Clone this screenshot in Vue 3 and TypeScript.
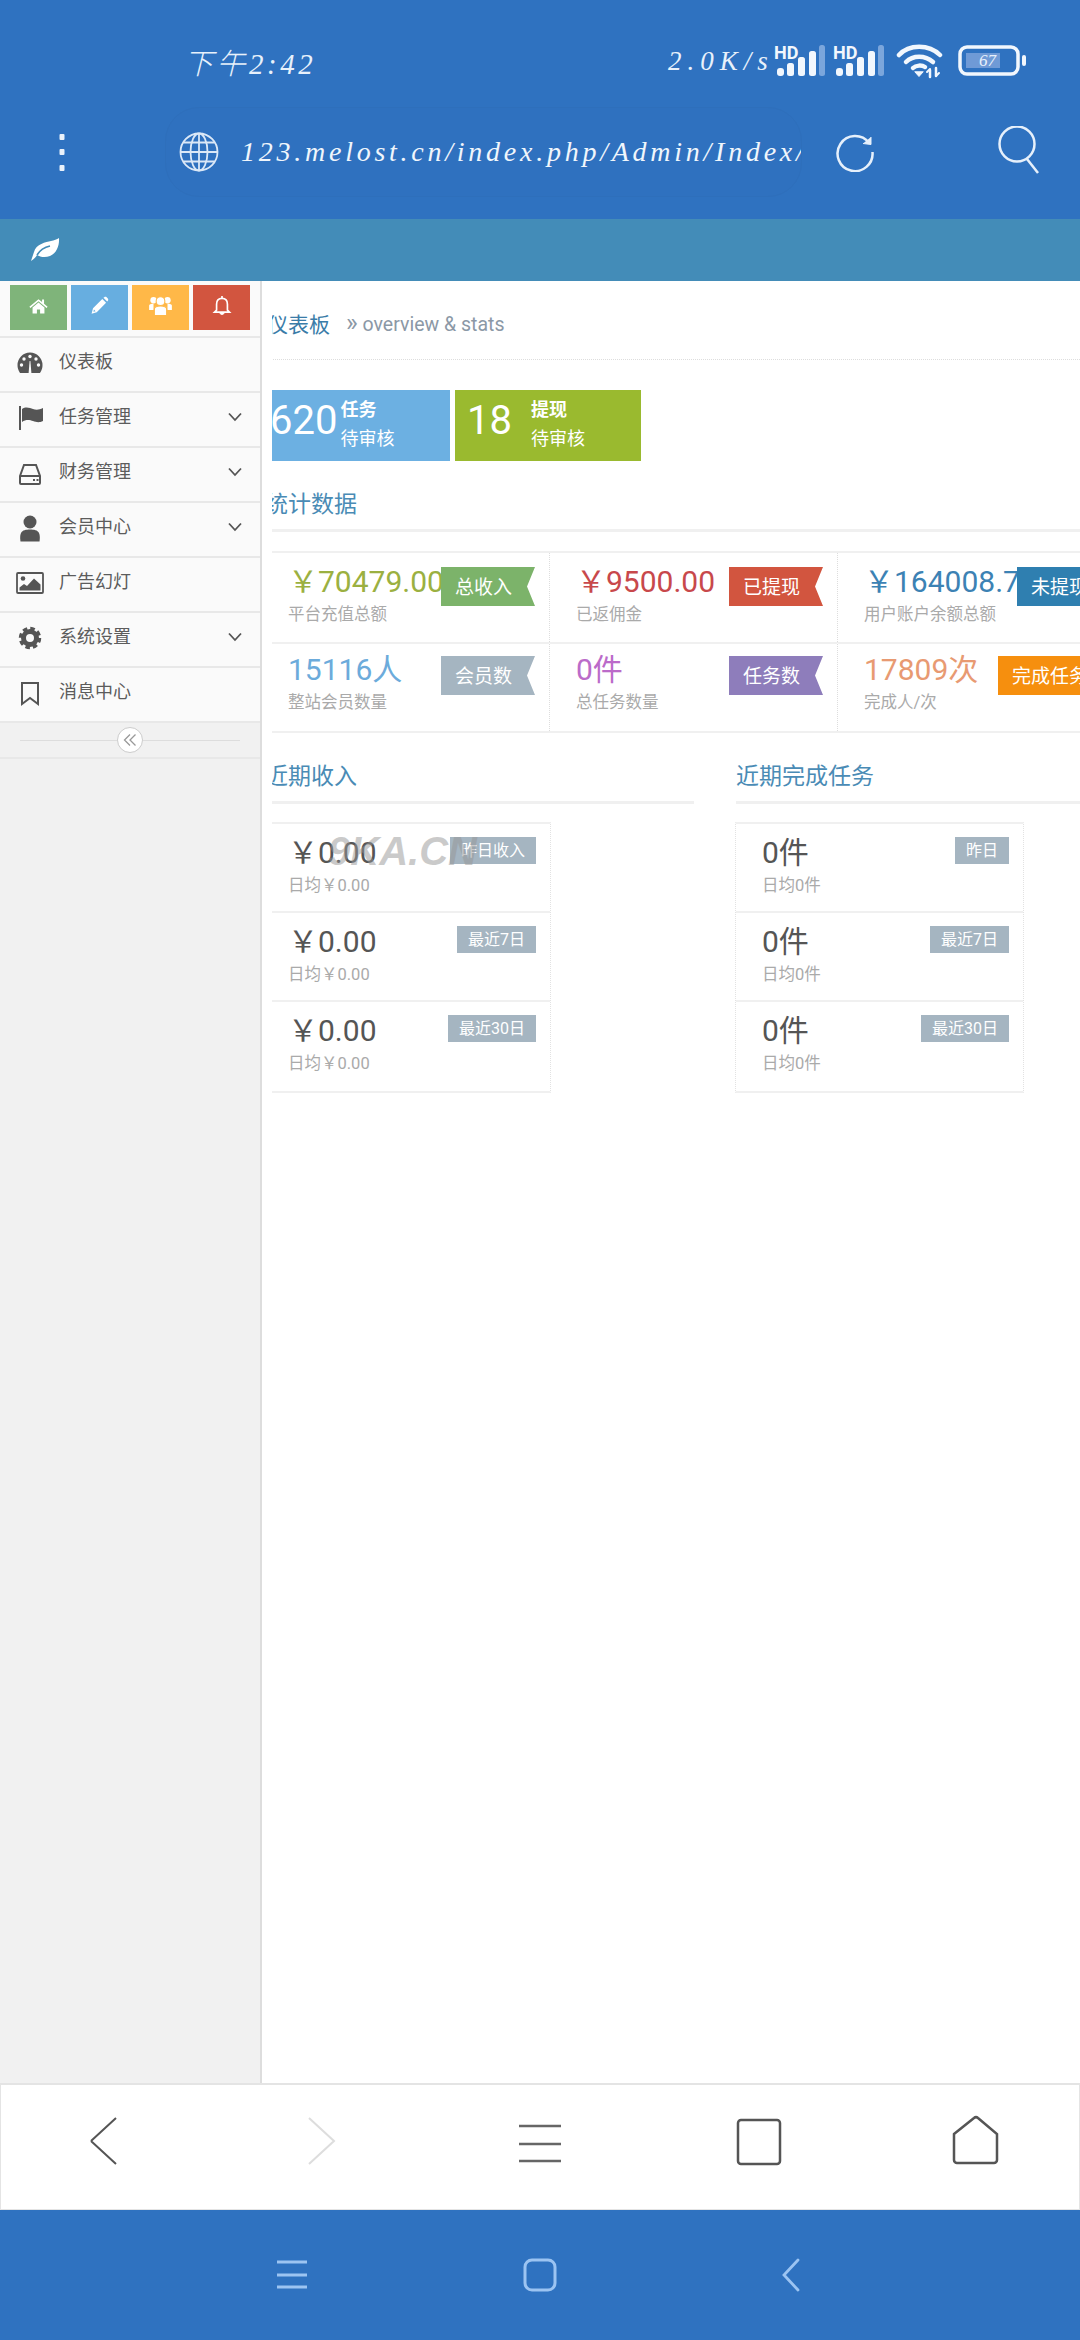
<script setup lang="ts">
interface Stat { value: string; label: string; tag: string; color: string; tagColor: string }
interface Row { value: string; sub: string; tag: string }

const Y = '\uFFE5'

const menu = [
  { icon: 'gauge', label: '仪表板', more: false },
  { icon: 'flag', label: '任务管理', more: true },
  { icon: 'hdd', label: '财务管理', more: true },
  { icon: 'user', label: '会员中心', more: true },
  { icon: 'picture', label: '广告幻灯', more: false },
  { icon: 'cog', label: '系统设置', more: true },
  { icon: 'bookmark', label: '消息中心', more: false },
]

const stats: Stat[] = [
  { value: Y + '70479.00', label: '平台充值总额', tag: '总收入', color: 'c-olive', tagColor: 'b-green' },
  { value: Y + '9500.00', label: '已返佣金', tag: '已提现', color: 'c-red', tagColor: 'b-red' },
  { value: Y + '164008.75', label: '用户账户余额总额', tag: '未提现', color: 'c-blue', tagColor: 'b-blue' },
  { value: '15116人', label: '整站会员数量', tag: '会员数', color: 'c-sky', tagColor: 'b-grey' },
  { value: '0件', label: '总任务数量', tag: '任务数', color: 'c-purple', tagColor: 'b-purple' },
  { value: '17809次', label: '完成人/次', tag: '完成任务', color: 'c-orange', tagColor: 'b-orange' },
]

const income: Row[] = [
  { value: Y + '0.00', sub: '日均' + Y + '0.00', tag: '昨日收入' },
  { value: Y + '0.00', sub: '日均' + Y + '0.00', tag: '最近7日' },
  { value: Y + '0.00', sub: '日均' + Y + '0.00', tag: '最近30日' },
]

const tasks: Row[] = [
  { value: '0件', sub: '日均0件', tag: '昨日' },
  { value: '0件', sub: '日均0件', tag: '最近7日' },
  { value: '0件', sub: '日均0件', tag: '最近30日' },
]
</script>

<template>
  <div class="app">
    <header class="top">
      <div class="status">
        <span class="time">下午2:42</span>
        <span class="speed">2.0K/s</span>
        <svg class="sig sig1" width="52" height="32" viewBox="0 0 52 32">
          <text x="0" y="13.5" class="hd">HD</text>
          <rect x="3" y="23" width="7" height="8" rx="3" fill="#f2f7fd" />
          <rect x="13" y="18" width="7" height="13" rx="2.5" fill="#f2f7fd" />
          <rect x="24" y="12" width="7" height="19" rx="2.5" fill="#f2f7fd" />
          <rect x="35" y="6" width="7" height="25" rx="2.5" fill="#f2f7fd" />
          <rect x="45" y="0" width="6" height="31" rx="2.5" fill="#7ba6dc" />
        </svg>
        <svg class="sig sig2" width="52" height="32" viewBox="0 0 52 32">
          <text x="0" y="13.5" class="hd">HD</text>
          <rect x="3" y="23" width="7" height="8" rx="3" fill="#f2f7fd" />
          <rect x="13" y="18" width="7" height="13" rx="2.5" fill="#f2f7fd" />
          <rect x="24" y="12" width="7" height="19" rx="2.5" fill="#f2f7fd" />
          <rect x="35" y="6" width="7" height="25" rx="2.5" fill="#f2f7fd" />
          <rect x="45" y="0" width="6" height="31" rx="2.5" fill="#7ba6dc" />
        </svg>
        <svg class="wifi" width="48" height="36" viewBox="0 0 48 36" fill="none" stroke="#f2f7fd" stroke-linecap="round">
          <path d="M3 12 C13 1 33 1 44 12" stroke-width="4.5" />
          <path d="M10 19 C17 12 29 12 37 19" stroke-width="4.5" />
          <path d="M17 25 C20 22 26 22 29 24" stroke-width="4.5" />
          <path d="M19 29 L23 33.5 L27 29 Z" fill="#f2f7fd" stroke-width="1" />
          <path d="M34 27 V34 M40 25 V33" stroke-width="2.5" />
          <path d="M31 29 L34 26 M43 30 L40 33" stroke-width="2" />
        </svg>
        <svg class="bat" width="70" height="32" viewBox="0 0 70 32">
          <rect x="2" y="2" width="58" height="27" rx="7" fill="none" stroke="#f2f7fd" stroke-width="3.5" />
          <rect x="8" y="8" width="34" height="15" fill="#6f9ad6" />
          <text x="21" y="21" class="batt">67</text>
          <rect x="64" y="10" width="4" height="11" rx="2" fill="#f2f7fd" />
        </svg>
      </div>
      <div class="browser">
        <svg class="dots" width="10" height="44" viewBox="0 0 10 44" fill="#eaf2fb">
          <rect x="2.5" y="4" width="5" height="6" rx="1" />
          <rect x="2.5" y="19" width="5" height="6" rx="1" />
          <rect x="2.5" y="35" width="5" height="6" rx="1" />
        </svg>
        <div class="pill">
          <svg class="globe" width="40" height="40" viewBox="0 0 40 40" fill="none" stroke="#dbe8f7" stroke-width="1.8">
            <circle cx="20" cy="20" r="18.5" />
            <ellipse cx="20" cy="20" rx="8.5" ry="18.5" />
            <path d="M20 1.5 V38.5 M1.5 20 H38.5 M4.5 10.5 H35.5 M4.5 29.5 H35.5" />
          </svg>
          <span class="url">123.melost.cn/index.php/Admin/Index/</span>
        </div>
        <svg class="reload" width="40" height="40" viewBox="0 0 40 40" fill="none" stroke="#e6f0fb" stroke-width="2.5">
          <path d="M34 11 A17.5 17.5 0 1 0 37.5 20" />
          <path d="M28 11.5 L36 12.5 L36 5" fill="#e6f0fb" stroke-width="1" />
        </svg>
        <svg class="search" width="48" height="48" viewBox="0 0 48 48" fill="none" stroke="#e6f0fb" stroke-width="2.5">
          <circle cx="22" cy="18" r="17.5" />
          <path d="M32 33 L43 47" />
        </svg>
      </div>
    </header>

    <div class="teal">
      <svg width="30" height="24" viewBox="0 0 30 24">
        <path d="M1 23 C2 20 3 17 4 14 C6 6 16 4 21 3 C24 2.400 27 1.500 29 0 C29.500 7 27 15 20 18 C15 20 10 19 7 17 C6 19 4 21 1 23 Z" fill="#fff" />
        <path d="M7 17 C10 12 15 9 20 8" fill="none" stroke="#438cb8" stroke-width="1.600" />
      </svg>
    </div>

    <div class="body">
      <aside class="side">
        <div class="quick">
          <div class="qb q-green">
            <svg width="19" height="19" viewBox="0 0 24 24" fill="#fff"><path d="M12 4 L0.500 13.500 L1.800 15 L12 6.700 L22.200 15 L23.500 13.500 L19 9.800 V4.500 H16.500 V7.700 Z" /><path d="M12 8.300 L4.500 14.500 V22 H10 V17 H14 V22 H19.500 V14.500 Z" /></svg>
          </div>
          <div class="qb q-blue">
            <svg width="19" height="19" viewBox="0 0 24 24" fill="#fff"><path d="M2 22.500 L3.800 15.500 L15.500 3.800 L20.300 8.500 L8.500 20.500 Z M5 17 L4.300 20 L7 19.300 Z" fill-rule="evenodd" /><path d="M17 2.300 L18 1.500 C19 .8 20 .8 21 1.500 L22.500 3 C23.200 4 23.200 5 22.500 6 L21.700 7 Z" /></svg>
          </div>
          <div class="qb q-orange">
            <svg width="23" height="21" viewBox="0 0 26 24" fill="#fff"><circle cx="5" cy="6" r="3.600" /><circle cx="21" cy="6" r="3.600" /><path d="M0 17 V12 C0 10.500 2 10 5 10 V17 Z M26 17 V12 C26 10.500 24 10 21 10 V17 Z" /><circle cx="13" cy="7" r="5" stroke="#ffb848" stroke-width="1.200" /><path d="M6 23.500 V16 C6 13 9 12.500 13 12.500 S20 13 20 16 V23.500 Z" stroke="#ffb848" stroke-width="1.200" /></svg>
          </div>
          <div class="qb q-red">
            <svg width="20" height="21" viewBox="0 0 24 24" fill="none" stroke="#fff" stroke-width="2"><path d="M5.500 17.500 V10.500 C5.500 6 8 3.500 12 3.500 S18.500 6 18.500 10.500 V17.500 L21 20 H3 Z" /><path d="M12 .5 V3.500" /><path d="M9.500 21 C10 23.500 14 23.500 14.500 21" fill="#fff" stroke-width="1" /></svg>
          </div>
        </div>
        <ul class="menu">
          <li v-for="item in menu" :key="item.label" class="item">
            <svg class="mi" width="28" height="28" viewBox="0 0 28 28">
              <template v-if="item.icon === 'gauge'">
                <path d="M4 24 C2 21 1.500 18.500 1.500 16 A12.500 12.500 0 0 1 26.500 16 C26.500 18.500 26 21 24 24 Z" fill="#555" />
                <circle cx="14" cy="7.500" r="1.700" fill="#fafafa" /><circle cx="8" cy="10" r="1.700" fill="#fafafa" /><circle cx="20" cy="10" r="1.700" fill="#fafafa" /><circle cx="5.500" cy="16" r="1.700" fill="#fafafa" /><circle cx="22.500" cy="16" r="1.700" fill="#fafafa" />
                <path d="M12.600 24 L13.600 12 H14.400 L15.400 24 Z" fill="#fafafa" />
              </template>
              <template v-else-if="item.icon === 'flag'">
                <rect x="3" y="2" width="2" height="24" fill="#555" />
                <path d="M6 5 C10 2 14 4 17 5 S23 6 27 4 V17 C23 19 20 18 17 17 S10 15 6 18 Z" fill="#555" />
              </template>
              <template v-else-if="item.icon === 'hdd'">
                <path d="M4 17 L8 6 H20 L24 17 V24 A1 1 0 0 1 23 25 H5 A1 1 0 0 1 4 24 Z M4 17 H24" fill="none" stroke="#555" stroke-width="2" />
                <rect x="17" y="20" width="2" height="2" fill="#555" /><rect x="20.500" y="20" width="2" height="2" fill="#555" />
              </template>
              <template v-else-if="item.icon === 'user'">
                <circle cx="14" cy="8" r="6.500" fill="#555" />
                <path d="M4.500 27.500 C4 24 4 21 5 19 C6.500 16 10 15.500 14 15.500 S21.500 16 23 19 C24 21 24 24 23.500 27.500 Z" fill="#555" />
              </template>
              <template v-else-if="item.icon === 'picture'">
                <rect x="1" y="4" width="26" height="20" rx="1" fill="none" stroke="#555" stroke-width="1.800" />
                <circle cx="7" cy="9.500" r="2.300" fill="#555" />
                <path d="M3.500 21.500 V18.500 L8 15 L11 17 L18 9.500 L24.500 15.500 V21.500 Z" fill="#555" />
              </template>
              <template v-else-if="item.icon === 'cog'">
                <circle cx="14" cy="14" r="6.500" fill="none" stroke="#555" stroke-width="5" />
                <circle cx="14" cy="14" r="9.500" fill="none" stroke="#555" stroke-width="3.500" stroke-dasharray="4.460 3" />
              </template>
              <template v-else>
                <path d="M6 4 H22 V25 L14 19 L6 25 Z" fill="none" stroke="#555" stroke-width="2" />
              </template>
            </svg>
            <span class="ml">{{ item.label }}</span>
            <svg v-if="item.more" class="chev" width="14" height="10" viewBox="0 0 14 10" fill="none" stroke="#555" stroke-width="1.800"><path d="M1 1.500 L7 8 L13 1.500" /></svg>
          </li>
        </ul>
        <div class="collapse">
          <span class="cl"></span>
          <span class="cb">
            <svg width="14" height="14" viewBox="0 0 14 14" fill="none" stroke="#999" stroke-width="1.300"><path d="M7 1.500 L1.500 7 L7 12.500 M12.500 1.500 L7 7 L12.500 12.500" /></svg>
          </span>
          <span class="cl"></span>
        </div>
      </aside>

      <main class="main">
        <div class="inner">
          <div class="page-title">
            <span class="pt">仪表板</span>
            <span class="ps"><span class="pa">»</span> overview &amp; stats</span>
          </div>
          <div class="boxes">
            <div class="box box-a">
              <span class="bn">620</span>
              <div class="bl"><b>任务</b><span>待审核</span></div>
            </div>
            <div class="box box-b">
              <span class="bn">18</span>
              <div class="bl"><b>提现</b><span>待审核</span></div>
            </div>
          </div>
          <h3 class="sec sec-l">统计数据</h3>
          <div class="grid">
            <div v-for="s in stats" :key="s.label" class="cell">
              <div class="val" :class="s.color">{{ s.value }}</div>
              <div class="sub">{{ s.label }}</div>
              <span class="rib" :class="s.tagColor">{{ s.tag }}</span>
            </div>
          </div>
          <div class="lower">
            <section class="col col-l">
              <h3 class="sec sec-l">近期收入</h3>
              <div class="list">
                <div v-for="r in income" :key="r.tag" class="row">
                  <div class="val">{{ r.value }}</div>
                  <div class="sub">{{ r.sub }}</div>
                  <span class="tag">{{ r.tag }}</span>
                </div>
                <span class="mark">9KA.CN</span>
              </div>
            </section>
            <section class="col col-r">
              <h3 class="sec">近期完成任务</h3>
              <div class="list list-r">
                <div v-for="r in tasks" :key="r.tag" class="row">
                  <div class="val">{{ r.value }}</div>
                  <div class="sub">{{ r.sub }}</div>
                  <span class="tag">{{ r.tag }}</span>
                </div>
              </div>
            </section>
          </div>
        </div>
      </main>
    </div>

    <nav class="tools">
      <svg width="60" height="60" viewBox="0 0 60 60" fill="none" stroke="#555" stroke-width="2"><path d="M37 7 L12 30 M12 30 L37 53" /></svg>
      <svg width="60" height="60" viewBox="0 0 60 60" fill="none" stroke="#ddd" stroke-width="2"><path d="M14 7 L39 30 L14 53" /></svg>
      <svg width="60" height="60" viewBox="0 0 60 60" fill="none" stroke="#666" stroke-width="2.500"><path d="M8 15 H50 M8 33 H50 M8 50 H50" /></svg>
      <svg width="60" height="60" viewBox="0 0 60 60" fill="none" stroke="#555" stroke-width="2.500"><rect x="11" y="9" width="42" height="44" rx="3" /></svg>
      <svg width="60" height="60" viewBox="0 0 60 60" fill="none" stroke="#555" stroke-width="2.500"><path d="M11 23 L31 7 A3 3 0 0 1 35 7 L54 23 V49 A3 3 0 0 1 51 52 H14 A3 3 0 0 1 11 49 Z" /></svg>
    </nav>

    <nav class="sysnav">
      <svg width="40" height="40" viewBox="0 0 40 40" fill="none" stroke="#9cc4f2" stroke-width="3"><path d="M5 7 H35 M5 20 H35 M5 32 H35" /></svg>
      <svg width="40" height="40" viewBox="0 0 40 40" fill="none" stroke="#9cc4f2" stroke-width="3"><rect x="5" y="5" width="30" height="30" rx="7" /></svg>
      <svg width="40" height="40" viewBox="0 0 40 40" fill="none" stroke="#9cc4f2" stroke-width="2.800" stroke-linecap="round"><path d="M27 5 L13 20 L27 35" /></svg>
    </nav>
  </div>
</template>

<style scoped>
.app {
  width: 1080px;
  height: 2340px;
  display: flex;
  flex-direction: column;
  overflow: hidden;
  background: #fff;
  font-family: Roboto, "Noto Sans CJK SC", sans-serif;
  color: #555;
}

.top {
  height: 219px;
  flex: none;
  background: #2f72c0;
  box-sizing: border-box;
}
.status {
  height: 107px;
  box-sizing: border-box;
  padding: 15px 0 0 184px;
  display: flex;
  align-items: center;
  color: #e8f1fb;
}
.time {
  width: 131px;
  font-family: "Liberation Serif", "Noto Sans CJK SC", serif;
  font-style: italic;
  font-weight: 300;
  font-size: 29px;
  letter-spacing: 3.5px;
  white-space: nowrap;
}
.speed {
  margin-left: 353px;
  width: 104px;
  font-family: "Liberation Serif", serif;
  font-style: italic;
  font-size: 27px;
  letter-spacing: 6px;
  white-space: nowrap;
}
.sig { overflow: visible; }
.sig1 { margin-left: 2px; }
.sig2 { margin-left: 7px; }
.wifi { margin-left: 11px; }
.bat { margin-left: 14px; }
.hd {
  font: 700 18px Roboto, sans-serif;
  fill: #f2f7fd;
}
.batt {
  font: italic 17px "Liberation Serif", serif;
  fill: #e8f1fb;
}

.browser {
  height: 90px;
  padding-left: 57px;
  display: flex;
  align-items: center;
}
.dots { margin-right: 98px; flex: none; }
.pill {
  width: 637px;
  height: 90px;
  flex: none;
  box-sizing: border-box;
  padding-left: 13px;
  border-radius: 34px;
  background: #2f71bf;
  border: 1px solid #2e6fbb;
  display: flex;
  align-items: center;
  gap: 22px;
  overflow: hidden;
}
.globe { flex: none; }
.url {
  font-family: "Liberation Serif", serif;
  font-style: italic;
  font-size: 28px;
  letter-spacing: 3.75px;
  white-space: nowrap;
  color: #f0f6fc;
}
.reload { margin-left: 33px; flex: none; }
.search { margin: -4px 0 0 120px; flex: none; }

.teal {
  height: 62px;
  flex: none;
  background: #438cb8;
  padding-left: 30px;
  display: flex;
  align-items: center;
}

.body {
  flex: 1;
  min-height: 0;
  display: flex;
}
.side {
  width: 262px;
  flex: none;
  box-sizing: border-box;
  background: #f1f1f1;
  border-right: 2px solid #ddd;
}
.quick {
  height: 55px;
  box-sizing: border-box;
  padding: 4px 10px 0;
  display: flex;
  gap: 4px;
  background: #fafafa;
}
.qb {
  width: 57px;
  height: 45px;
  display: flex;
  align-items: center;
  justify-content: center;
  padding-bottom: 4px;
  box-sizing: border-box;
}
.q-green { background: #7fb47a; }
.q-blue { background: #67aee0; }
.q-orange { background: #ffb848; }
.q-red { background: #d2553f; }
.menu {
  list-style: none;
  margin: 0;
  padding: 0;
}
.item {
  height: 55px;
  box-sizing: border-box;
  padding: 0 18px 3px 16px;
  display: flex;
  align-items: center;
  gap: 15px;
  background: #fafafa;
  border-top: 2px solid #e8e8e8;
}
.mi { flex: none; }
.ml { font-size: 18px; color: #5c5c5c; margin-bottom: 6px; }
.chev { margin-left: auto; margin-bottom: 3px; }
.collapse {
  height: 38px;
  box-sizing: border-box;
  padding: 0 20px;
  display: flex;
  align-items: center;
  border-top: 2px solid #e8e8e8;
  border-bottom: 2px solid #e8e8e8;
}
.cl { flex: 1; height: 1px; background: #ddd; }
.cb {
  width: 26px;
  height: 26px;
  box-sizing: border-box;
  border-radius: 50%;
  background: #fff;
  border: 1px solid #ccc;
  display: flex;
  align-items: center;
  justify-content: center;
}

.main {
  flex: 1;
  min-width: 0;
  margin-left: 10px;
  overflow: hidden;
}
.inner {
  width: 864px;
  margin-left: -10px;
}
.page-title {
  height: 79px;
  box-sizing: border-box;
  padding: 5px 0 0 5px;
  display: flex;
  align-items: center;
  border-bottom: 1px dotted #ddd;
  white-space: nowrap;
}
.pt { font-size: 21px; color: #3a7ca8; }
.ps { margin-left: 16px; font-size: 19.5px; color: #8b98a6; }
.pa { font-size: 25px; line-height: 1; }
.boxes {
  margin-top: 30px;
  display: flex;
  gap: 5px;
}
.box {
  height: 71px;
  display: flex;
  color: #fff;
}
.box-a { width: 188px; background: #6cb0e2; padding-left: 8px; gap: 3px; box-sizing: border-box; }
.box-b { width: 186px; background: #9aba2f; padding-left: 12px; gap: 19px; box-sizing: border-box; }
.bn { font-size: 40px; line-height: 62px; }
.bl {
  padding-top: 5px;
  display: flex;
  flex-direction: column;
  font-size: 18px;
  line-height: 29px;
}
.sec {
  margin: 29px 0 0;
  font-size: 23px;
  font-weight: 400;
  line-height: 30px;
  padding-bottom: 9px;
  border-bottom: 3px solid #f0f0f0;
  color: #4a8bb5;
  white-space: nowrap;
}
.sec-l { padding-left: 3px; }

.grid {
  margin-top: 19px;
  width: 864px;
  display: grid;
  grid-template-columns: repeat(3, 288px);
  border-top: 2px solid #f0f0f0;
  border-bottom: 2px solid #f0f0f0;
}
.cell {
  position: relative;
  height: 89px;
  box-sizing: border-box;
  padding: 11px 0 0 26px;
  border-right: 1px dotted #ddd;
  overflow: hidden;
}
.cell:nth-child(n + 4) { border-top: 2px solid #f0f0f0; padding-top: 8px; }
.cell:nth-child(n + 4) .rib { top: 12px; }
.val {
  font-size: 30px;
  line-height: 36px;
  white-space: nowrap;
}
.sub {
  margin-top: 3px;
  font-size: 16.5px;
  line-height: 24px;
  color: #aaa;
  white-space: nowrap;
}
.rib {
  position: absolute;
  top: 14px;
  right: 14px;
  height: 39px;
  box-sizing: border-box;
  padding: 0 23px 3px 14px;
  display: flex;
  align-items: center;
  font-size: 19px;
  color: #fff;
  clip-path: polygon(0 0, 100% 0, calc(100% - 8px) 50%, 100% 100%, 0 100%);
  white-space: nowrap;
}
.c-olive { color: #9bb041; }
.c-red { color: #c8484b; }
.c-blue { color: #3c82b4; }
.c-sky { color: #6cabdb; }
.c-purple { color: #bb6bc9; }
.c-orange { color: #e89a72; }
.b-green { background: #7cb36a; }
.b-red { background: #d2553f; }
.b-blue { background: #2f7fb0; }
.b-grey { background: #a5b5c1; }
.b-purple { background: #8e7dbb; }
.b-orange { background: #f68f0e; }

.lower { display: flex; }
.col-l { width: 432px; margin-right: 42px; flex: none; }
.col-r { width: 390px; flex: none; }
.list {
  position: relative;
  margin-top: 18px;
  width: 289px;
  box-sizing: border-box;
  border-top: 2px solid #f0f0f0;
  border-right: 1px dotted #e2e2e2;
  border-bottom: 2px solid #f0f0f0;
}
.list-r { margin-left: -1px; border-left: 1px dotted #e2e2e2; }
.row {
  position: relative;
  height: 89px;
  box-sizing: border-box;
  padding: 11px 0 0 26px;
  border-bottom: 2px solid #f0f0f0;
}
.row:last-of-type { border-bottom: 0; }
.row .val { color: #555; }
.tag {
  position: absolute;
  top: 13px;
  right: 14px;
  height: 27px;
  padding: 0 11px 3px;
  box-sizing: border-box;
  display: flex;
  align-items: center;
  background: #a5b5c1;
  color: #fff;
  font-size: 16px;
  white-space: nowrap;
}
.mark {
  position: absolute;
  top: 4px;
  left: 66px;
  font: italic 700 40px/46px "Liberation Sans", sans-serif;
  color: rgba(150, 150, 150, 0.5);
  white-space: nowrap;
  pointer-events: none;
}

.tools {
  height: 127px;
  flex: none;
  box-sizing: border-box;
  border: 1px solid #e4e4e4;
  border-top-width: 2px;
  padding-bottom: 12px;
  display: grid;
  grid-template-columns: repeat(5, 216px);
  justify-items: center;
  align-items: center;
  background: #fff;
}
.sysnav {
  height: 130px;
  flex: none;
  box-sizing: border-box;
  padding-left: 272px;
  display: flex;
  align-items: center;
  gap: 208px;
  background: #2f72c0;
}
.sysnav svg:last-child { margin-left: 3px; }
</style>
